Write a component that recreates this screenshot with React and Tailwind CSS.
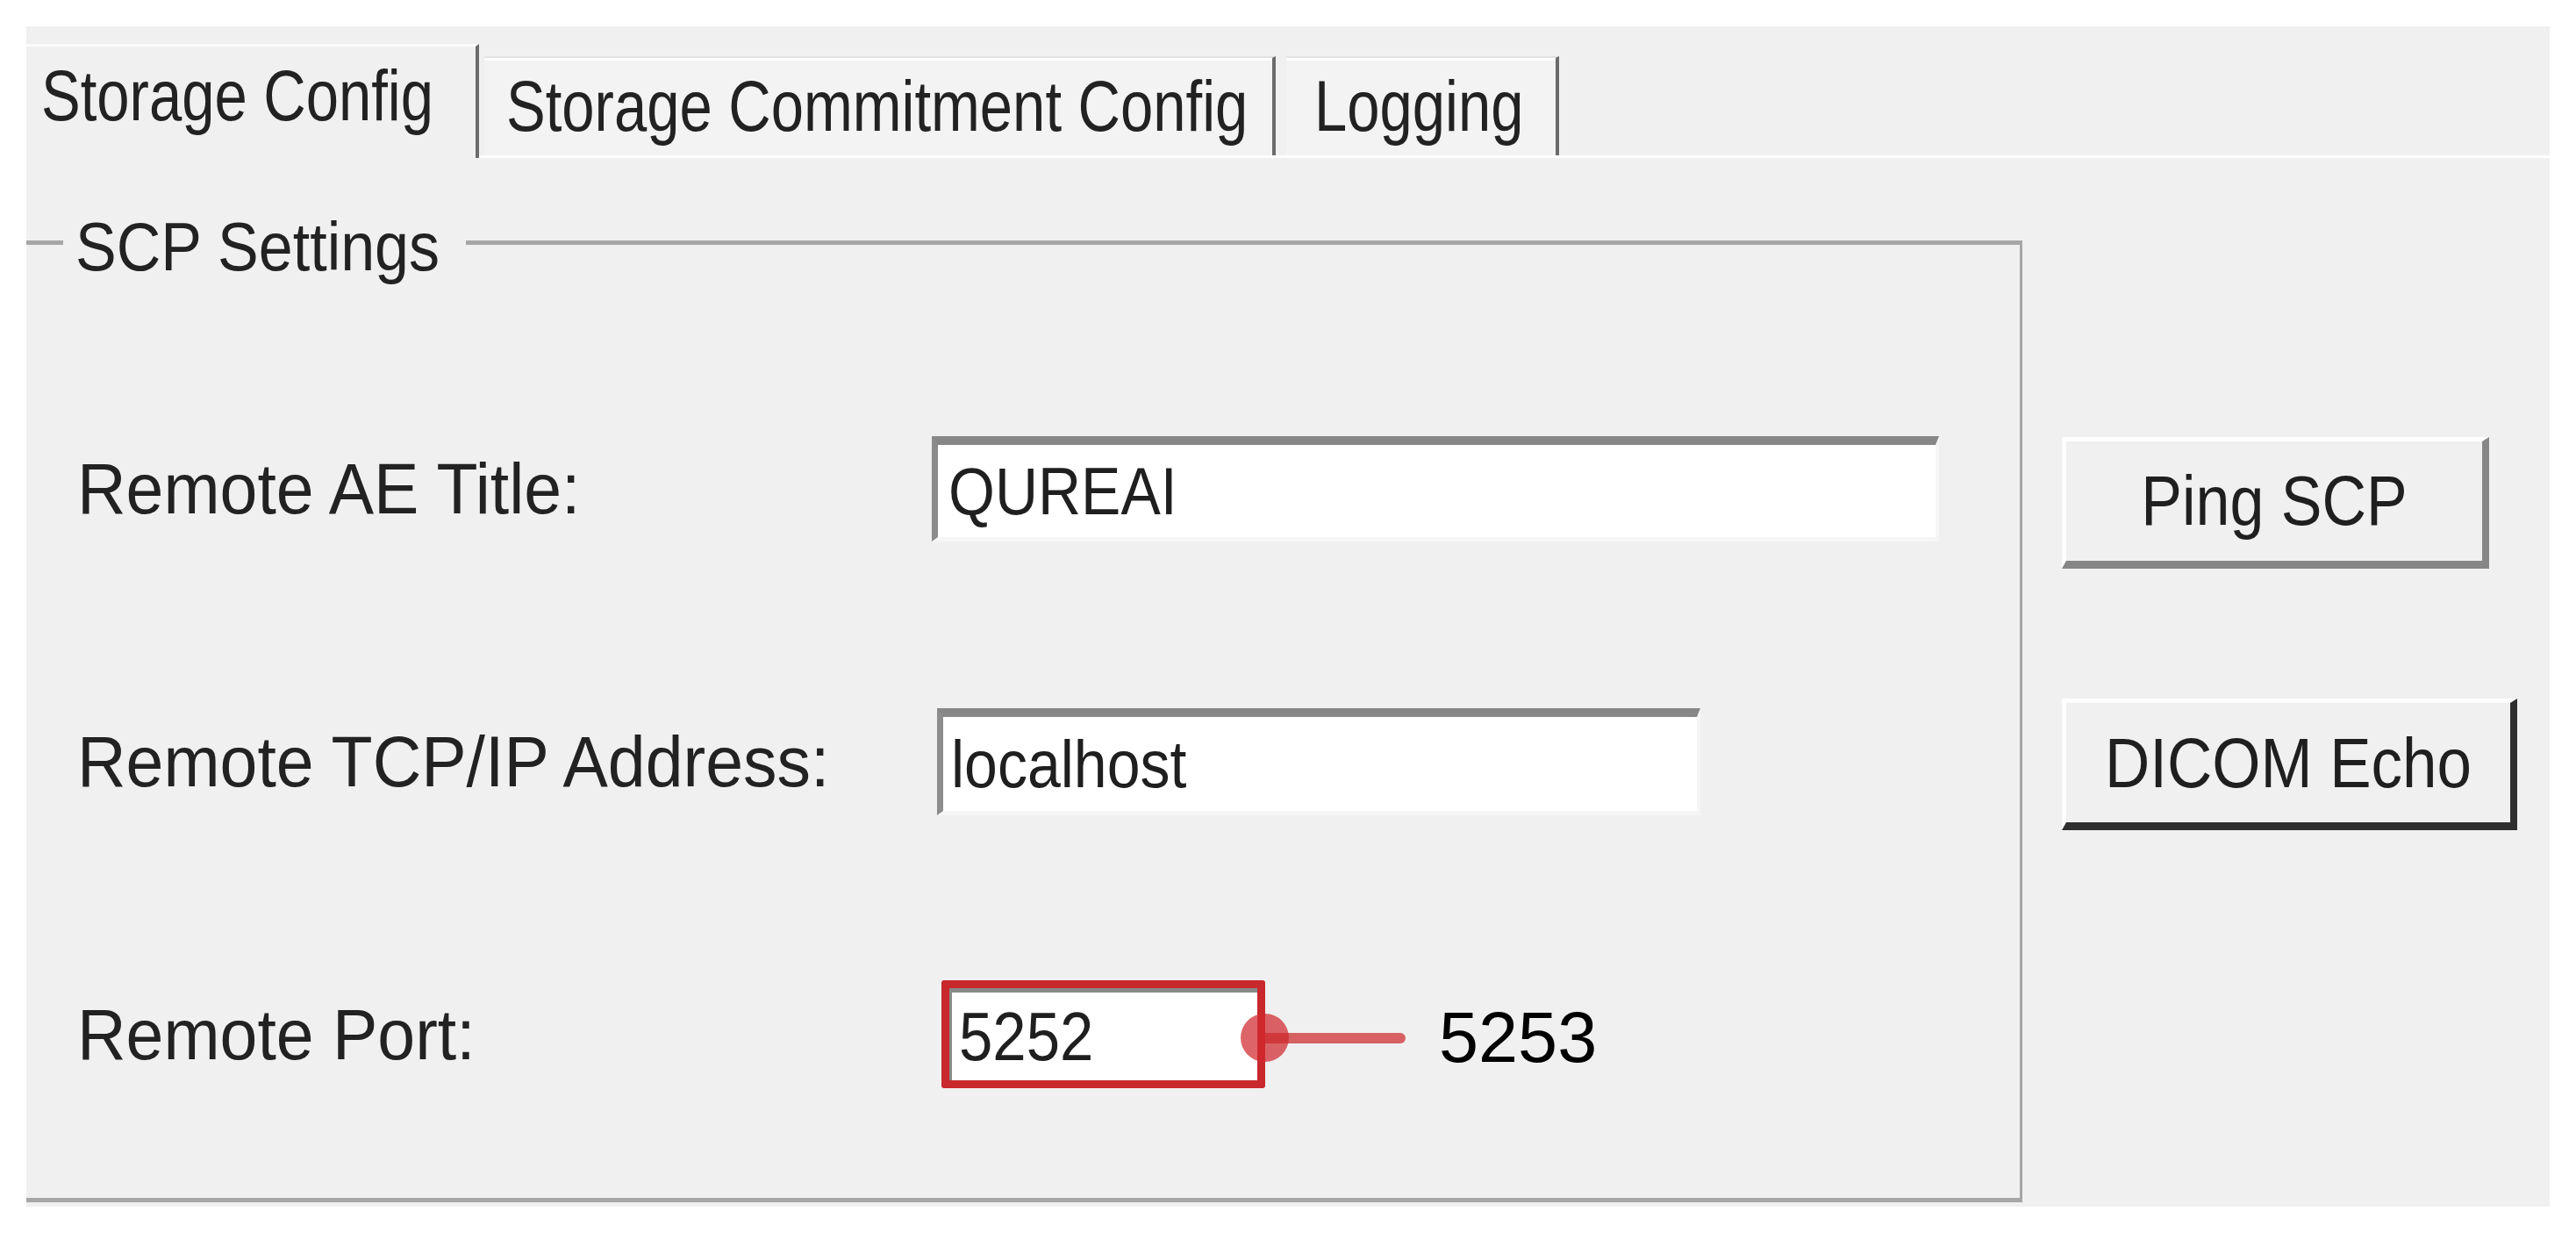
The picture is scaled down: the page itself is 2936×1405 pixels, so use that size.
import React from "react";

const sans = "font-['Liberation_Sans',Arial,sans-serif]";

function Tab({ label, className, textClass }) {
  return (
    <div className={className}>
      <span className={textClass}>{label}</span>
    </div>
  );
}

function SunkenBox({ value, className, pad }) {
  return (
    <div
      className={`flex items-center bg-white border-t-[10px] border-t-[#878787] border-l-[7px] border-l-[#8c8c8c] border-r-[4px] border-r-[#f6f6f6] border-b-[5px] border-b-[#f6f6f6] ${pad} ${className}`}
    >
      <span className="block text-[68px] leading-none scale-y-[1.13] text-[#1f1f1f]">{value}</span>
    </div>
  );
}

function RaisedButton({ label, className, dark }) {
  return (
    <button
      type="button"
      className={`flex items-center justify-center bg-[#f0f0f0] border-t-[5px] border-l-[5px] border-t-[#fdfdfd] border-l-[#fdfdfd] border-r-[8px] border-b-[9px] ${
        dark ? "border-r-[#2f2f2f] border-b-[#2f2f2f]" : "border-r-[#868686] border-b-[#868686]"
      } ${className}`}
    >
      <span className={`block leading-none scale-y-[1.13] text-[#1f1f1f] ${dark ? "text-[71px]" : "text-[70px]"}`}>
        {label}
      </span>
    </button>
  );
}

function Row({ label, children }) {
  return (
    <div className="flex items-center h-[311px]">
      <span className="block w-[974px] shrink-0 text-[77px] leading-none scale-y-[1.07] text-[#222222]">
        {label}
      </span>
      {children}
    </div>
  );
}

export default function App() {
  return (
    <div className={`w-[2936px] h-[1405px] bg-white p-[30px] ${sans}`}>
      <div className="w-[2876px] h-[1345px] bg-[#f0f0f0] overflow-hidden flex flex-col">
        {/* tab strip */}
        <div className="flex items-end h-[150px] shrink-0">
          <Tab
            label="Storage Config"
            className="w-[516px] h-[130px] shrink-0 bg-[#f0f0f0] border-t-[3px] border-t-[#fbfbfb] border-r-[4px] border-r-[#6b6b6b] pl-[17px] pt-[22px]"
            textClass="block text-[67px] leading-none scale-y-[1.22] text-[#222222] whitespace-nowrap"
          />
          <div className="flex-1 h-full flex items-end pl-[6px] border-b-[3px] border-b-white">
            <Tab
              label="Storage Commitment Config"
              className="w-[902px] h-[113px] shrink-0 bg-[#f3f3f3] border-t-2 border-t-[#e2e2e2] shadow-[inset_0_3px_0_#ffffff] border-r-[4px] border-r-[#6b6b6b] pl-[25px] pt-[21px]"
              textClass="block text-[67px] leading-none scale-y-[1.22] text-[#222222] whitespace-nowrap"
            />
            <Tab
              label="Logging"
              className="ml-[12px] w-[311px] h-[113px] shrink-0 bg-[#f3f3f3] border-t-2 border-t-[#e2e2e2] shadow-[inset_0_3px_0_#ffffff] border-r-[4px] border-r-[#6b6b6b] pl-[32px] pt-[21px]"
              textClass="block text-[67px] leading-none scale-y-[1.22] text-[#222222] whitespace-nowrap"
            />
          </div>
        </div>

        {/* panel */}
        <div className="flex items-start flex-1">
          <fieldset className="m-0 mt-[61px] w-[2275px] shrink-0 border-solid border-t-[5px] border-r-[3px] border-b-[5px] border-l-0 border-[#a6a6a6] pt-[90px] pl-[58px] pb-[31px] pr-0">
            <legend className="-ml-[16px] pl-[14px] pr-[30px]">
              <span className="block text-[70px] leading-none scale-y-[1.1] translate-y-[6px] text-[#222222]">
                SCP Settings
              </span>
            </legend>

            <Row label="Remote AE Title:">
              <SunkenBox value="QUREAI" className="w-[1148px] h-[120px]" pad="pl-[12px]" />
            </Row>

            <Row label="Remote TCP/IP Address:">
              <SunkenBox value="localhost" className="ml-[6px] w-[870px] h-[122px]" pad="pl-[9px]" />
            </Row>

            <Row label="Remote Port:">
              <div className="ml-[11px] w-[369px] h-[123px] shrink-0 rounded-[3px] border-[9px] border-[#c9282d]">
                <div className="h-full flex items-center bg-white border-t-[5px] border-t-[#8a8a8a] border-l-[3px] border-l-[#8a8a8a] pl-[8px]">
                  <span className="block text-[69px] leading-none scale-y-[1.14] text-[#1f1f1f]">5252</span>
                </div>
              </div>
              <div className="flex items-center -ml-[28px] translate-y-[4px]">
                <div className="w-[55px] h-[55px] shrink-0 rounded-full bg-[rgba(208,40,46,0.72)]" />
                <div className="-ml-[27px] w-[160px] h-[12px] shrink-0 rounded-r-full bg-[rgba(205,40,45,0.72)]" />
                <span className="ml-[38px] block text-[81px] leading-none text-black">5253</span>
              </div>
            </Row>
          </fieldset>

          <div className="ml-[45px] pt-[318px] flex flex-col items-start">
            <RaisedButton label="Ping SCP" className="w-[487px] h-[150px]" />
            <RaisedButton label="DICOM Echo" className="mt-[148px] w-[519px] h-[150px]" dark />
          </div>
        </div>
      </div>
    </div>
  );
}
